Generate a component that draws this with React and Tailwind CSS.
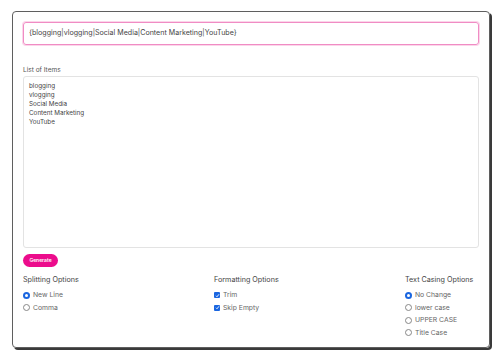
import React, { useState } from "react";

const items = ["blogging", "vlogging", "Social Media", "Content Marketing", "YouTube"];

const Radio = ({ checked, label }) => (
  <label className="flex items-center gap-[3px] h-[12.5px] text-[6.8px] text-[#666]">
    {checked ? (
      <span className="w-[7px] h-[7px] rounded-full bg-[#1a66e0] flex items-center justify-center">
        <span className="w-[3px] h-[3px] rounded-full bg-white" />
      </span>
    ) : (
      <span className="w-[7px] h-[7px] rounded-full border border-[#888] bg-white" />
    )}
    <span>{label}</span>
  </label>
);

const Check = ({ label }) => (
  <label className="flex items-center gap-[3px] h-[12.5px] text-[6.8px] text-[#666]">
    <span className="w-[6px] h-[6px] rounded-[1px] bg-[#1a66e0] flex items-center justify-center">
      <svg viewBox="0 0 10 10" className="w-[5px] h-[5px]">
        <path d="M2 5.5 L4 7.5 L8 2.5" fill="none" stroke="white" strokeWidth="1.8" />
      </svg>
    </span>
    <span>{label}</span>
  </label>
);

export default function App() {
  const [text] = useState(items.join("\n"));

  return (
    <div className="w-[500px] h-[359px] bg-white pt-[11px] pl-[12px] font-['Inter',sans-serif]">
      <div className="w-[478px] h-[337px] border border-[#5f5f5f] rounded-[4px] shadow-[2px_2px_0_#3a3a3a] px-[10px] pt-[10px] flex flex-col">
        <div className="h-[23px] border border-[#f08cc4] rounded-[3px] shadow-[0_0_0_1px_#fbd6ea] flex items-center px-[5px] text-[7.1px] text-[#444]">
          {"{" + items.join("|") + "}"}
        </div>

        <div className="mt-[21px] text-[6.5px] text-[#555] leading-[9px]">List of Items</div>
        <div className="mt-[1px] h-[172px] border border-[#e3e3e3] rounded-[3px] px-[5px] pt-[5px] text-[6.3px] leading-[9px] text-[#444] whitespace-pre">
          {text}
        </div>

        <button className="mt-[6px] w-[35px] h-[13px] rounded-full bg-[#ec0c8c] text-white text-[5px] font-semibold">
          Generate
        </button>

        <div className="mt-[7px] grid grid-cols-[191px_191px_1fr]">
          <div className="flex flex-col">
            <div className="text-[7.2px] text-[#444] leading-[11px] mb-[4px]">Splitting Options</div>
            <Radio checked label="New Line" />
            <Radio label="Comma" />
          </div>
          <div className="flex flex-col">
            <div className="text-[7.2px] text-[#444] leading-[11px] mb-[4px]">Formatting Options</div>
            <Check label="Trim" />
            <Check label="Skip Empty" />
          </div>
          <div className="flex flex-col">
            <div className="text-[7.2px] text-[#444] leading-[11px] mb-[4px]">Text Casing Options</div>
            <Radio checked label="No Change" />
            <Radio label="lower case" />
            <Radio label="UPPER CASE" />
            <Radio label="Title Case" />
          </div>
        </div>
      </div>
    </div>
  );
}
